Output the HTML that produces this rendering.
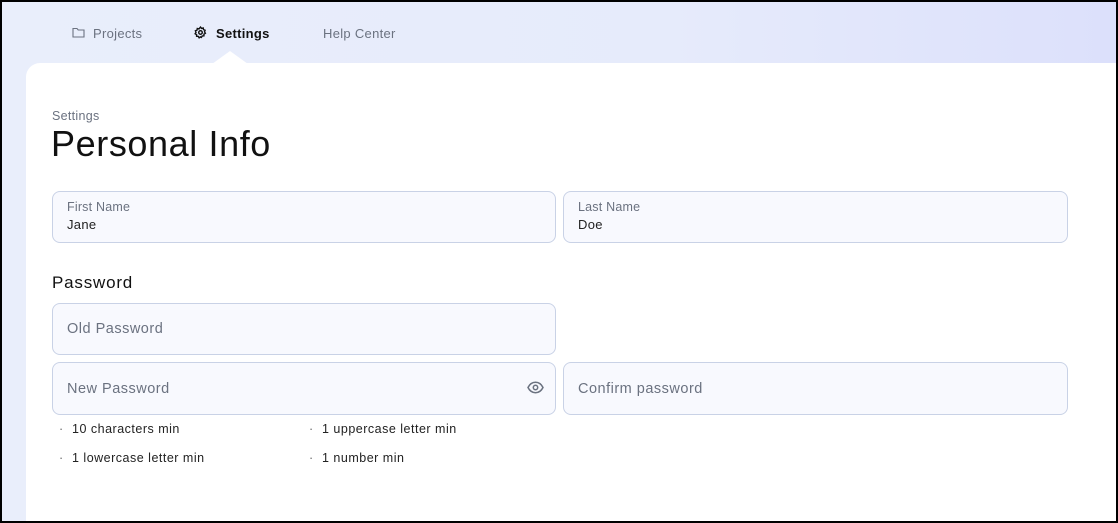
<!DOCTYPE html>
<html><head><style>
*{box-sizing:border-box;margin:0;padding:0}
html,body{width:1118px;height:523px;overflow:hidden;background:#000}
body{font-family:"Liberation Sans",sans-serif;position:relative}
.frame{position:absolute;left:2px;top:2px;width:1114px;height:519px;background:linear-gradient(90deg,#e9eefb 0%,#e6ebfb 60%,#dce0fb 100%);overflow:hidden}
.nav{position:absolute;top:0;left:0;height:61px;width:100%;font-size:13px;letter-spacing:0.3px}
.nav span{position:absolute;top:24px;color:#6b7280}
.card{position:absolute;left:24px;top:61px;right:0;bottom:0;background:#fff;border-top-left-radius:14px}
.notch{position:absolute;left:210px;top:49px;width:0;height:0;border-left:18px solid transparent;border-right:18px solid transparent;border-bottom:13px solid #fff}
.abs{position:absolute}
.field{position:absolute;background:#f8f9fe;border:1px solid #c9d2e6;border-radius:8px}
.lbl{position:absolute;left:14px;font-size:12.5px;color:#6b7280;letter-spacing:0.2px}
.val{position:absolute;left:14px;font-size:13px;color:#222;letter-spacing:0.3px}
.ph{position:absolute;left:14px;top:17px;font-size:14.5px;color:#6b7280;letter-spacing:0.5px}
.rule{position:absolute;font-size:12.5px;color:#222;letter-spacing:0.5px}
.rule:before{content:"·";position:absolute;left:-13px;color:#666}
</style></head><body>
<div class="frame">
 <div class="nav">
  <svg class="abs" style="left:70px;top:25px" width="13" height="11" viewBox="0 0 13 11"><path d="M1 1.5h4l1.2 1.5H12v7H1z" fill="none" stroke="#6b7280" stroke-width="1.1"/></svg>
  <span style="left:91px">Projects</span>
  <svg class="abs" style="left:192px;top:24px" width="13" height="13" viewBox="0 0 24 24"><path d="M12 2l2 2.5 3-.8.6 3 2.9 1.2-1.1 2.9 1.6 2.6-2.7 1.6v3.1l-3.1.3-1.6 2.7L12 20l-2.5 1.9-1.6-2.7-3.1-.3V16L2.1 14.4 3.7 11.8 2.6 8.9 5.5 7.7l.6-3 3 .8z" fill="none" stroke="#111" stroke-width="2.6"/><circle cx="12" cy="12" r="3.3" fill="none" stroke="#111" stroke-width="2.6"/></svg>
  <span style="left:214px;color:#111;font-weight:bold">Settings</span>
  <span style="left:321px">Help Center</span>
 </div>
 <div class="notch"></div>
 <div class="card"></div>
 <div class="abs" style="left:50px;top:107px;font-size:12.5px;color:#6b7280;letter-spacing:0.3px">Settings</div>
 <div class="abs" style="left:49px;top:121px;font-size:36px;color:#111;letter-spacing:0.6px">Personal Info</div>
 <div class="field" style="left:50px;top:189px;width:504px;height:52px"><div class="lbl" style="top:8px">First Name</div><div class="val" style="top:25px">Jane</div></div>
 <div class="field" style="left:561px;top:189px;width:505px;height:52px"><div class="lbl" style="top:8px">Last Name</div><div class="val" style="top:25px">Doe</div></div>
 <div class="abs" style="left:50px;top:271px;font-size:17px;color:#111;letter-spacing:0.8px">Password</div>
 <div class="field" style="left:50px;top:301px;width:504px;height:52px"><div class="ph">Old Password</div></div>
 <div class="field" style="left:50px;top:360px;width:504px;height:53px"><div class="ph" style="top:18px">New Password</div>
  <svg class="abs" style="left:474px;top:18px" width="17" height="13" viewBox="0 0 17 13"><path d="M1 6.5C3 2.5 6 1.3 8.5 1.3S14 2.5 16 6.5C14 10.5 11 11.7 8.5 11.7S3 10.5 1 6.5z" fill="none" stroke="#6b7280" stroke-width="1.5"/><circle cx="8.5" cy="6.5" r="2.2" fill="none" stroke="#6b7280" stroke-width="1.5"/></svg></div>
 <div class="field" style="left:561px;top:360px;width:505px;height:53px"><div class="ph" style="top:18px">Confirm password</div></div>
 <div class="rule" style="left:70px;top:420px">10 characters min</div>
 <div class="rule" style="left:320px;top:420px">1 uppercase letter min</div>
 <div class="rule" style="left:70px;top:449px">1 lowercase letter min</div>
 <div class="rule" style="left:320px;top:449px">1 number min</div>
</div>
</body></html>
